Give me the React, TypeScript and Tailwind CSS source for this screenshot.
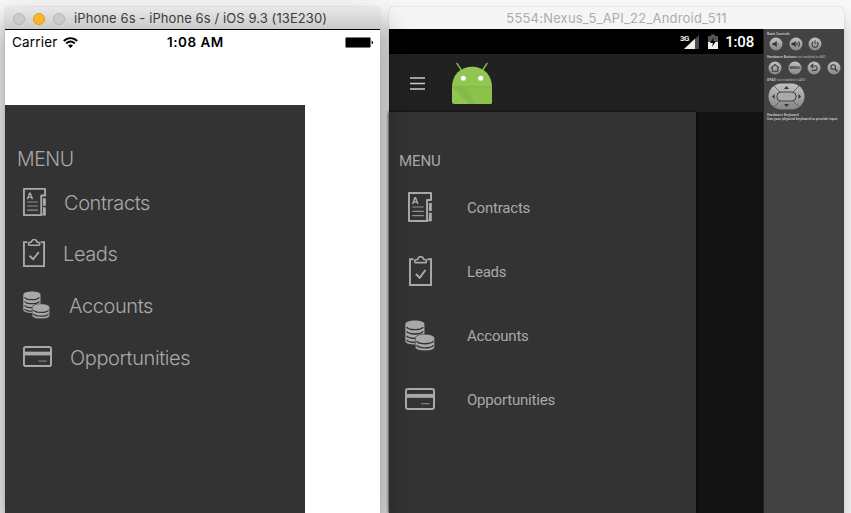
import type { CSSProperties, ReactNode } from 'react';

const INK = '#a9a9a9';
const BG = '#333333';

type IconProps = { w: number; h: number };

function ContractIcon({ w, h }: IconProps) {
  return (
    <svg width={w} height={h} viewBox="0 0 73 90" preserveAspectRatio="none" fill="none" stroke={INK} strokeWidth="6">
      <path d="M58 24H70V3H3V87H58Z" strokeLinejoin="round" />
      <path d="M68 33V57M68 62V88" strokeWidth="9" />
      <path d="M56 85H70" strokeWidth="5" />
      <path d="M13 45H48M13 58H48M13 71H48" strokeWidth="3.5" opacity=".8" />
      <path d="M14 36L21 17H23L30 36M17 30H27" strokeWidth="4.5" />
    </svg>
  );
}

function LeadIcon({ w, h }: IconProps) {
  return (
    <svg width={w} height={h} viewBox="0 0 71 90" preserveAspectRatio="none" fill="none" stroke={INK} strokeWidth="6">
      <path d="M14 10H3V87H68V10H57" />
      <path d="M19 20C15 11 22 10 27 10C29 -1 43 -1 45 10C50 10 57 11 53 20Z" strokeWidth="5" strokeLinejoin="round" />
      <path d="M21 54L33 65L51 42" />
    </svg>
  );
}

function CoinsIcon({ w, h }: IconProps) {
  return (
    <svg width={w} height={h} viewBox="0 0 91 92" preserveAspectRatio="none" fill="none">
      <path d="M1 12C1 -2 59 -2 59 12V62C59 76 1 76 1 62Z" fill={INK} />
      <g stroke={BG} strokeWidth="4">
        <path d="M5 21C12 31 48 31 55 21" />
        <path d="M5 34C12 44 48 44 55 34" />
        <path d="M5 47C12 57 48 57 55 47" />
        <path d="M5 59C12 69 48 69 55 59" />
      </g>
      <path d="M31 54C31 38 90 38 90 54V81C90 95 31 95 31 81Z" fill={INK} stroke={BG} strokeWidth="2" />
      <g stroke={BG} strokeWidth="4">
        <path d="M35 63C43 73 79 73 86 63" />
        <path d="M35 75C43 85 79 85 86 75" />
      </g>
    </svg>
  );
}

function CardIcon({ w, h }: IconProps) {
  return (
    <svg width={w} height={h} viewBox="0 0 90 67" preserveAspectRatio="none" fill="none" stroke={INK} strokeWidth="6">
      <rect x="3" y="3" width="84" height="61" rx="6" />
      <path d="M3 24H87" strokeWidth="12" />
      <path d="M48 48H74" strokeWidth="3" opacity=".8" />
    </svg>
  );
}

function IosTitle() {
  return (
    <div className="flex h-[22px] shrink-0 items-center rounded-t-[5px] bg-linear-to-b from-[#e8e8e8] to-[#cbcbcb] pl-2 pt-px">
      <i className="mr-2 size-3 rounded-full border border-[#b5b5b5] bg-[#cacaca]" />
      <i className="mr-2 size-3 rounded-full border border-[#dd9a22] bg-[#fdb427]" />
      <i className="size-3 rounded-full border border-[#b5b5b5] bg-[#cacaca]" />
      <span className="ml-[9px] whitespace-nowrap text-[13px] tracking-[0.09px] text-[#3c3c3c]">iPhone 6s - iPhone 6s / iOS 9.3 (13E230)</span>
    </div>
  );
}

function IosStatus() {
  return (
    <div className="flex h-6 items-center pl-[7px] pr-[6px] text-black">
      <span className="w-[51px] whitespace-nowrap text-[13.5px] tracking-[0.2px]">Carrier</span>
      <svg width="15" height="11" viewBox="0 0 15 11" fill="none" stroke="#000" strokeWidth="1.9">
        <path d="M.8 4C4.6 .1 10.4 .1 14.2 4M3.2 6.5C5.8 4 9.2 4 11.8 6.5" />
        <path d="M5 8.5Q7.5 6.5 10 8.5L7.5 11Z" fill="#000" stroke="none" />
      </svg>
      <span className="ml-[89px] whitespace-nowrap text-[13.5px] font-semibold tracking-[0.5px]">1:08 AM</span>
      <svg className="ml-auto" width="29" height="11" viewBox="0 0 29 11">
        <rect x=".5" y=".5" width="25" height="10" rx="1" fill="#000" stroke="#777" strokeWidth=".6" />
        <path d="M26.6 3.5Q29.6 5.5 26.6 7.5Z" fill="#000" />
      </svg>
    </div>
  );
}

function IosRow({ icon, gap, text }: { icon: ReactNode; gap: string; text: string }) {
  return (
    <div className="flex h-[51.6px] items-center pl-[18px]">
      {icon}
      <span className={`${gap} pt-[2px] text-[20px] font-[350] tracking-[-0.4px]`}>{text}</span>
    </div>
  );
}

function AndroidRow({ icon, text }: { icon: ReactNode; text: string }) {
  return (
    <div className="flex h-16 items-center">
      <div className="flex w-[78px] justify-center pr-[16px] pb-[2px]">{icon}</div>
      <span className="text-[15px] tracking-[-0.2px]">{text}</span>
    </div>
  );
}

function AndroidLogo() {
  return (
    <svg className="ml-[25.5px]" width="42" height="43" viewBox="0 0 126 129">
      <path d="M18 4L30 23M108 4L96 23" stroke="#8fc452" strokeWidth="4" strokeLinecap="round" />
      <path d="M3 75C3 38 29 14 63 14S123 38 123 75V120Q123 126 117 126H9Q3 126 3 120Z" fill="#91c653" />
      <path d="M3 75L55 126H117Q123 126 123 120V75Z" fill="#8bc34a" />
      <path d="M3 75H45L75 126H55Z" fill="#82b84a" opacity=".7" />
      <path d="M3 74H123" stroke="#7dae45" strokeWidth="2" />
      <circle cx="37" cy="49" r="7.5" fill="#fff" />
      <circle cx="89" cy="49" r="7.5" fill="#fff" />
    </svg>
  );
}

function Knob({ children }: { children: ReactNode }) {
  return (
    <svg width="14" height="14" viewBox="0 0 14 14" fill="none" stroke="#3d3d3d" strokeWidth="1.1">
      <circle cx="7" cy="7" r="6.5" fill="url(#metal)" stroke="none" />
      {children}
    </svg>
  );
}

function Tiny({ children, className = '' }: { children: ReactNode; className?: string }) {
  return <div className={`whitespace-nowrap font-['Open_Sans',sans-serif] text-[3.2px] leading-[4px] text-[#c4c4c4] ${className}`}>{children}</div>;
}

function Controls() {
  return (
    <aside className="w-[81px] shrink-0 border-l border-[#222] bg-[#424242] pl-[3px] pt-[3px]">
      <Tiny><b>Basic Controls</b></Tiny>
      <div className="mt-px flex gap-[5.5px] pl-[2px]">
        <svg width="0" height="0" className="-mr-[5.5px]">
          <defs>
            <linearGradient id="metal" x1="0" y1="0" x2="0" y2="1">
              <stop stopColor="#c2c2c2" />
              <stop offset="1" stopColor="#858585" />
            </linearGradient>
          </defs>
        </svg>
        <Knob><path d="M3.8 6H5.5L7.5 4.2V9.8L5.5 8H3.8ZM9 6V8" fill="#333" strokeWidth=".5" /></Knob>
        <Knob><path d="M2.8 6H4.4L6.4 4.2V9.8L4.4 8H2.8Z" fill="#333" strokeWidth=".5" /><path d="M8 5.5V8.5M9.5 4.5Q11.5 7 9.5 9.5" /></Knob>
        <Knob><path d="M5 5A3 3 0 1 0 9 5M7 3.5V7" /></Knob>
      </div>
      <Tiny className="mt-[3.5px]"><b>Hardware Buttons</b> not enabled in AVD</Tiny>
      <div className="mt-[2px] flex gap-[5.5px] pl-px">
        <Knob><path d="M3 7.2L7 3.6L11 7.2M4.3 7V10.2H9.7V7" /></Knob>
        <Knob><text x="7" y="8.3" fontSize="3.6" fontWeight="700" textAnchor="middle" fill="#333" stroke="none">MENU</text></Knob>
        <Knob><path d="M6 3L4 5L6 7M4 5H8.5Q10 5 10 7T8.5 9.4H5" /></Knob>
        <Knob><circle cx="6.2" cy="6" r="2.3" /><path d="M8 8L10.5 10.5" strokeWidth="1.5" /></Knob>
      </div>
      <Tiny className="mt-[3px]"><b>DPAD</b> not enabled in AVD</Tiny>
      <svg className="ml-px mt-px" width="37" height="27" viewBox="0 0 37 27">
        <rect x=".5" y=".5" width="36" height="26" rx="13" fill="url(#metal)" />
        <path d="M6 3L13 10M31 3L24 10M6 24L13 17M31 24L24 17" stroke="#555" strokeWidth=".8" />
        <rect x="9" y="9" width="19" height="9" rx="4" fill="#aaa" stroke="#444" />
        <path d="M16 6L18.5 3L21 6ZM16 21L18.5 24L21 21ZM6.5 11L4 13.5L6.5 16ZM30.5 11L33 13.5L30.5 16Z" fill="#333" />
      </svg>
      <Tiny className="mt-[3px]"><b>Hardware Keyboard</b></Tiny>
      <Tiny><b>Use your physical keyboard to provide input</b></Tiny>
    </aside>
  );
}

export default function App() {
  const smooth: CSSProperties = { WebkitFontSmoothing: 'antialiased' };
  return (
    <main style={smooth} className="flex h-[513px] w-[851px] gap-[9px] overflow-hidden bg-[#f8f8f8] pl-[5px] pt-[7px] font-['Inter',sans-serif]">
      <section className="relative z-10 flex w-[375px] shrink-0 flex-col rounded-t-[5px] shadow-[0_0_1px_#888,0_16px_30px_rgba(0,0,0,0.45)]">
        <IosTitle />
        <div className="flex flex-1 flex-col border-t border-black bg-white">
          <IosStatus />
          <nav className="mt-[51px] w-[300px] flex-1 bg-[#333] pt-[41px] text-[#a9a9a9]">
            <h1 className="h-[30px] pl-3 text-[19.5px] font-[350] leading-[26px] tracking-[-0.4px]">MENU</h1>
            <IosRow icon={<ContractIcon w={23} h={28} />} gap="ml-[18px]" text="Contracts" />
            <IosRow icon={<LeadIcon w={22} h={28} />} gap="ml-[18px]" text="Leads" />
            <IosRow icon={<CoinsIcon w={27} h={28} />} gap="ml-[19px]" text="Accounts" />
            <IosRow icon={<CardIcon w={29} h={21} />} gap="ml-[18px]" text="Opportunities" />
          </nav>
        </div>
      </section>
      <section className="flex w-[455px] shrink-0 flex-col rounded-t-[5px] shadow-[0_0_1px_#888,0_12px_20px_rgba(0,0,0,0.22)]">
        <div className="flex h-[22px] shrink-0 items-center justify-center rounded-t-[5px] bg-[#f5f5f5] pt-px text-[13px] tracking-[0.2px] text-[#acacac]">5554:Nexus_5_API_22_Android_511</div>
        <div className="flex flex-1">
          <div className="flex flex-1 flex-col bg-[#131313] font-['Roboto',sans-serif]">
            <div className="flex h-[25px] items-center justify-end bg-black pr-[9px] text-white">
              <svg width="39" height="17" viewBox="0 0 39 17">
                <text x="0" y="7.5" fontSize="8" fontWeight="700" fill="#eee" letterSpacing="-.5">3G</text>
                <path d="M4 16L19 2V16Z" fill="#4b4b4b" />
                <path d="M4 16L15 5.7V16Z" fill="#eee" />
                <path d="M28 3H31V1.5H35V3H38V16H28Z" fill="#555" />
                <path d="M28 9H38V16H28Z" fill="#eee" />
                <path d="M34 4L30 10H33L32 14L36 8H33Z" fill="#000" />
              </svg>
              <span className="ml-[6px] pt-px text-[15px] font-medium tracking-[-0.2px]">1:08</span>
            </div>
            <div className="flex h-[58px] items-center bg-[#212121] pl-[21px]">
              <svg width="15" height="13" viewBox="0 0 15 13" stroke="#ccc" strokeWidth="1.5"><path d="M0 1H15M0 6.5H15M0 12H15" /></svg>
              <AndroidLogo />
            </div>
            <nav className="w-[307px] flex-1 bg-[#333] pt-[38px] text-[#a9a9a9] shadow-[0_0_3px_#000]">
              <h1 className="h-[26px] pl-[10px] pt-px text-[15px] leading-5 tracking-[-0.1px]">MENU</h1>
              <AndroidRow icon={<ContractIcon w={24} h={30} />} text="Contracts" />
              <AndroidRow icon={<LeadIcon w={23} h={30} />} text="Leads" />
              <AndroidRow icon={<CoinsIcon w={30} h={31} />} text="Accounts" />
              <AndroidRow icon={<CardIcon w={30} h={22} />} text="Opportunities" />
            </nav>
          </div>
          <Controls />
        </div>
      </section>
    </main>
  );
}
